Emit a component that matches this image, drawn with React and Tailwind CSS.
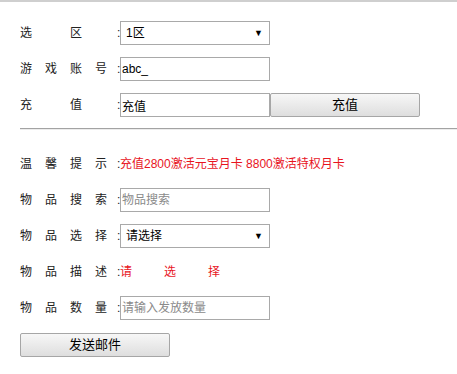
import React from 'react';

const font = { fontFamily: '"Liberation Sans", "Noto Sans CJK SC", sans-serif' };

// label laid out on a 4-slot grid (pitch 25px), empty strings keep a slot blank
function Label({ chars }) {
  return (
    <div className="flex items-center h-full text-[12px] text-[#222]">
      <div className="grid grid-cols-[25px_25px_25px_22px] w-[97px]">
        {chars.map((c, i) => (
          <span key={i}>{c}</span>
        ))}
      </div>
      <span className="w-[3px]">:</span>
    </div>
  );
}

function Row({ chars, children }) {
  return (
    <div className="flex items-center h-[24px]">
      <Label chars={chars} />
      {children}
    </div>
  );
}

function TextBox({ value, placeholder }) {
  return (
    <input
      className="w-[150px] h-[24px] border border-[#a9a9a9] px-[1px] text-[12px] text-black placeholder:text-[#8a8a8a] outline-none"
      style={font}
      defaultValue={value}
      placeholder={placeholder}
    />
  );
}

function SelectBox({ value }) {
  return (
    <div className="w-[150px] h-[24px] border border-[#a9a9a9] flex items-center justify-between pl-[5px] pr-[6px] text-[12px] text-black bg-white">
      <span>{value}</span>
      <span className="text-[9px] leading-none">▼</span>
    </div>
  );
}

function Btn({ children, className = '' }) {
  return (
    <button
      className={`w-[150px] h-[24px] border border-[#a6a6a6] rounded-[2px] bg-gradient-to-b from-[#f7f7f7] to-[#dedede] text-[13px] text-black ${className}`}
      style={font}
    >
      {children}
    </button>
  );
}

export default function App() {
  return (
    <div className="w-[457px] h-[374px] bg-white border-t-2 border-[#cfcfcf]" style={font}>
      <div className="flex flex-col gap-[12px] pt-[19px] pl-[20px]">
        <Row chars={['选', '', '区', '']}>
          <SelectBox value="1区" />
        </Row>
        <Row chars={['游', '戏', '账', '号']}>
          <TextBox value="abc_" />
        </Row>
        <Row chars={['充', '', '值', '']}>
          <TextBox value="充值" />
          <Btn>充值</Btn>
        </Row>
      </div>

      <div className="ml-[20px] mt-[11px] border-t border-[#a3a3a3] border-b border-b-[#ececec]" />

      <div className="flex flex-col gap-[12px] pt-[22px] pl-[20px]">
        <Row chars={['温', '馨', '提', '示']}>
          <span className="text-[12px] text-[#e8141e]">充值2800激活元宝月卡 8800激活特权月卡</span>
        </Row>
        <Row chars={['物', '品', '搜', '索']}>
          <TextBox placeholder="物品搜索" />
        </Row>
        <Row chars={['物', '品', '选', '择']}>
          <SelectBox value="请选择" />
        </Row>
        <Row chars={['物', '品', '描', '述']}>
          <div className="flex gap-[32px] text-[12px] text-[#e8141e]">
            <span>请</span>
            <span>选</span>
            <span>择</span>
          </div>
        </Row>
        <Row chars={['物', '品', '数', '量']}>
          <TextBox placeholder="请输入发放数量" />
        </Row>
        <div>
          <Btn className="text-[12px]">发送邮件</Btn>
        </div>
      </div>
    </div>
  );
}
